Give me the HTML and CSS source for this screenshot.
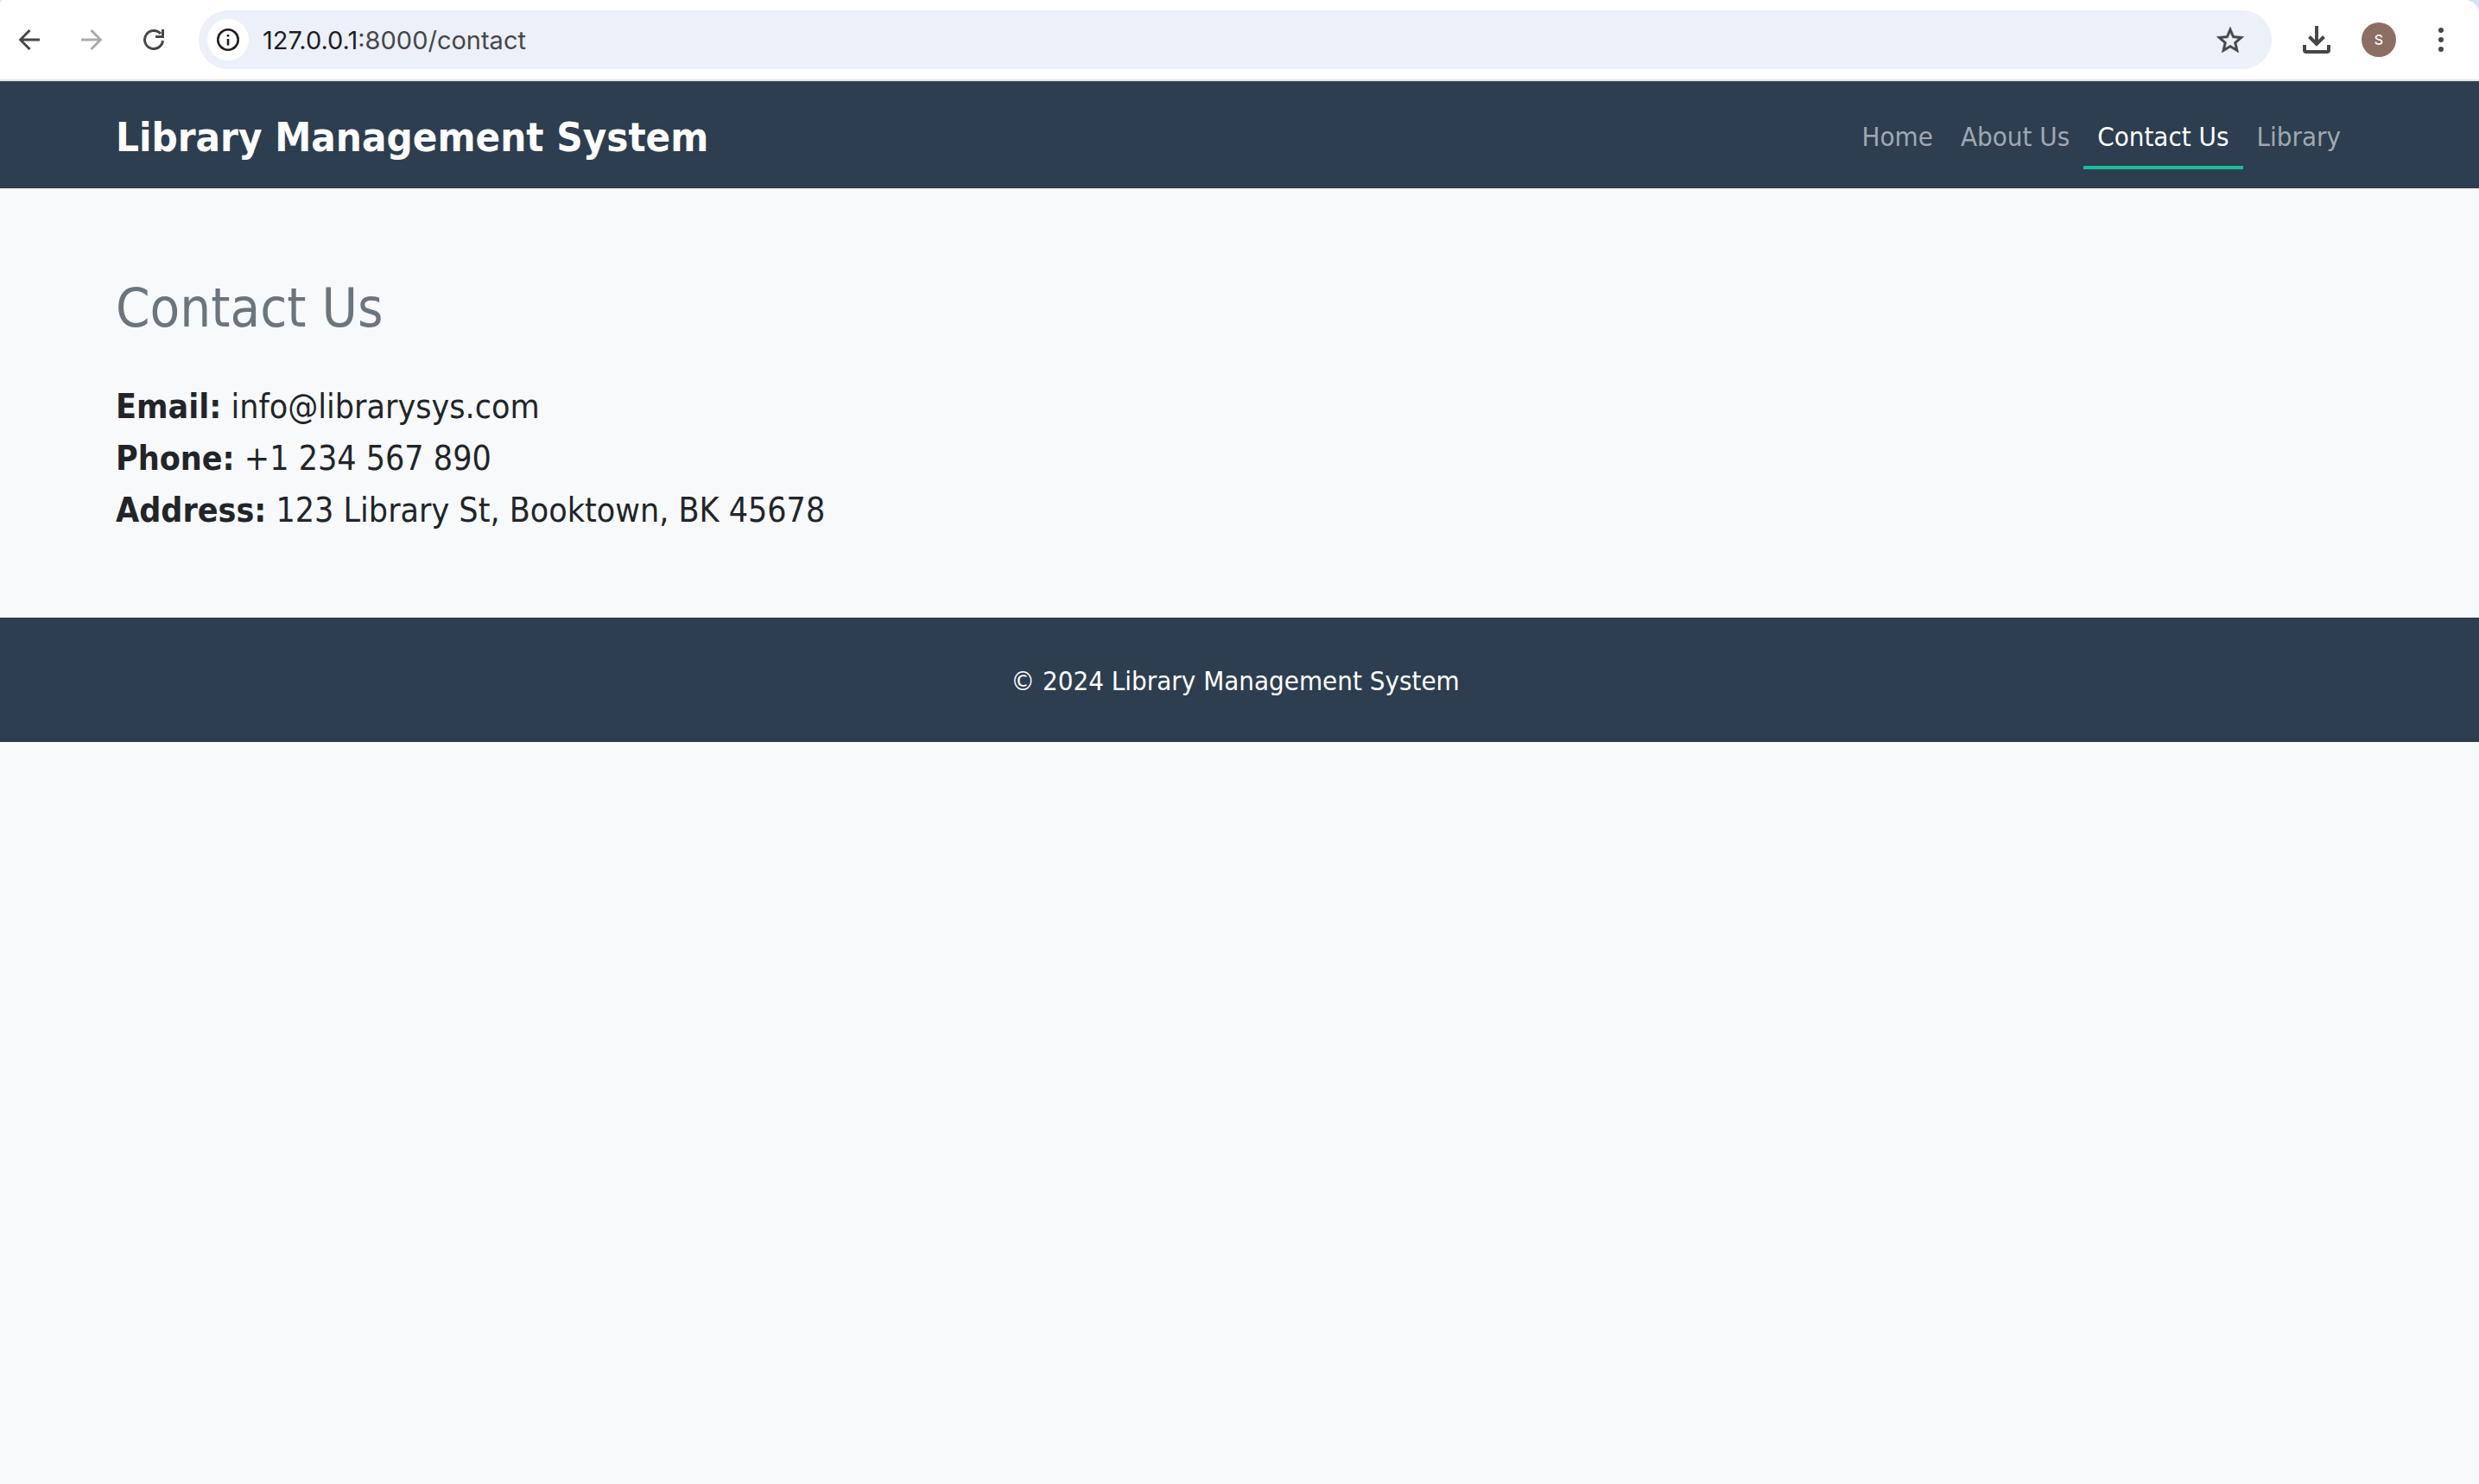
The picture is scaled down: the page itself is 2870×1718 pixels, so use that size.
FILE: index.html
```html
<!DOCTYPE html>
<html lang="en">
<head>
<meta charset="utf-8">
<title>Contact Us</title>
<link rel="stylesheet" href="styles.css">
</head>
<body>
<div class="browser">
  <div class="toolbar">
    <button class="tool" type="button" aria-label="Back"><svg viewBox="0 0 24 24" width="24" height="24"><path d="M24 12H2M12.500 1L1.500 12l11 11" fill="none" stroke="currentColor" stroke-width="3"/></svg></button>
    <button class="tool tool-off" type="button" aria-label="Forward" disabled><svg viewBox="0 0 24 24" width="24" height="24"><path d="M0 12h22M11.500 1l11 11-11 11" fill="none" stroke="currentColor" stroke-width="3"/></svg></button>
    <button class="tool" type="button" aria-label="Reload"><svg viewBox="0 0 24 24" width="24" height="24"><path d="M22.500 13A10.500 10.500 0 1 1 20 5.100" fill="none" stroke="currentColor" stroke-width="3"/><path d="M21 0h3v10H14V7h7z" fill="currentColor"/></svg></button>
    <div class="omnibox">
      <button class="info" type="button" aria-label="Site information"><svg viewBox="0 0 26 26" width="26" height="26"><circle cx="13" cy="13" r="11.700" fill="none" stroke="currentColor" stroke-width="2.600"/><path d="M11.700 12h2.600v7.500h-2.600zM11.700 7h2.600v2.600h-2.600z" fill="currentColor"/></svg></button>
      <div class="url"><span class="host">127.0.0.1</span>:8000/contact</div>
      <button class="star" type="button" aria-label="Bookmark"><svg viewBox="2 2 20 19" width="32" height="30"><path fill="currentColor" stroke="currentColor" stroke-width=".3" d="M22 9.240l-7.190-.620L12 2 9.190 8.630 2 9.240l5.460 4.730L5.820 21 12 17.270 18.180 21l-1.630-7.030L22 9.240zM12 15.400l-3.760 2.270 1-4.280-3.320-2.880 4.380-.380L12 6.100l1.710 4.040 4.380.380-3.320 2.880 1 4.280L12 15.400z"/></svg></button>
    </div>
    <button class="tool" type="button" aria-label="Downloads"><svg viewBox="0 0 32 32" width="32" height="32"><path d="M16 0v21M7.500 12.500l8.500 8.500 8.500-8.500M2 22v6q0 2 2 2h24q2 0 2-2v-6" fill="none" stroke="currentColor" stroke-width="4"/></svg></button>
    <button class="avatar" type="button">S</button>
    <button class="tool" type="button" aria-label="Menu"><svg viewBox="0 0 6 28" width="6" height="28"><g fill="currentColor"><circle cx="3" cy="3" r="3"/><circle cx="3" cy="14" r="3"/><circle cx="3" cy="25" r="3"/></g></svg></button>
  </div>
</div>
<header class="navbar">
  <div class="container navbar-inner">
    <a class="brand" href="#">Library Management System</a>
    <nav class="links">
      <a class="link" href="#">Home</a>
      <a class="link" href="#">About Us</a>
      <a class="link active" href="#" aria-current="page">Contact Us</a>
      <a class="link" href="#">Library</a>
    </nav>
  </div>
</header>
<main class="container content">
  <h2>Contact Us</h2>
  <p><strong>Email:</strong> info@librarysys.com<br><strong>Phone:</strong> +1 234 567 890<br><strong>Address:</strong> 123 Library St, Booktown, BK 45678</p>
</main>
<footer class="footer">
  <p class="container">© 2024 Library Management System</p>
</footer>
</body>
</html>
```
FILE: styles.css
```css
* { box-sizing: border-box; }

body {
  margin: 0;
  background: #f8f9fb;
  color: #212529;
  font-family: Tahoma, "DejaVu Sans Condensed", "DejaVu Sans", sans-serif;
}

h2, p { margin: 0; }
a { text-decoration: none; }

button {
  display: flex;
  align-items: center;
  justify-content: center;
  flex: none;
  margin: 0;
  padding: 0;
  border: 0;
  background: none;
  color: #474747;
  font: inherit;
}

/* Browser toolbar */
.browser { background: #d3e3fd; }

.toolbar {
  display: flex;
  align-items: center;
  padding: 12px 20px 12px 10px;
  background: #fff;
  border-bottom: 2px solid #dfe3e0;
  border-radius: 4px 16px 0 0;
  font-family: Inter, sans-serif;
}

.tool { width: 48px; height: 48px; margin-right: 24px; }
.tool:last-child { margin-right: 0; }
.tool-off { color: #ababab; }

.omnibox {
  display: flex;
  align-items: center;
  flex: 1;
  height: 68px;
  margin: 0 28px 0 4px;
  padding: 0 32px 0 10px;
  border-radius: 34px;
  background: #ecf0f9;
}

.info {
  width: 48px;
  height: 48px;
  border-radius: 50%;
  background: #fff;
  color: #1f1f1f;
}

.url { flex: 1; padding-left: 16px; color: #474747; font-size: 29px; }
.host { color: #1f1f1f; }

.avatar {
  width: 40px;
  height: 40px;
  margin-right: 28px;
  margin-left: 4px;
  border-radius: 50%;
  background: #8d6e63;
  color: #fff;
  font-size: 16px;
  font-weight: 500;
}

.container {
  width: 100%;
  max-width: 2650px;
  margin: 0 auto;
  padding: 0 34px 0 24px;
}

.navbar { padding: 22px 0; background: #2c3e50; }

.navbar-inner {
  display: flex;
  align-items: center;
  justify-content: space-between;
}

.brand { padding-top: 4px; color: #fff; font-size: 47px; font-weight: 700; }
.links { display: flex; }

.link {
  padding: 16px 16px 8px;
  border-bottom: 4px solid transparent;
  color: #a0a8b0;
  font-size: 31px;
  line-height: 52px;
}

.link.active { border-color: #1abc9c; color: #fff; }

.content { padding-top: 100px; padding-bottom: 94px; }

h2 {
  margin-bottom: 46px;
  color: #6c757d;
  font-size: 63px;
  font-weight: 400;
  line-height: 77px;
}

.content p { font-size: 39px; line-height: 60px; }

.footer {
  padding: 49px 0 47px;
  background: #2c3e50;
  color: #fff;
  font-size: 31px;
  line-height: 48px;
  text-align: center;
}
```
